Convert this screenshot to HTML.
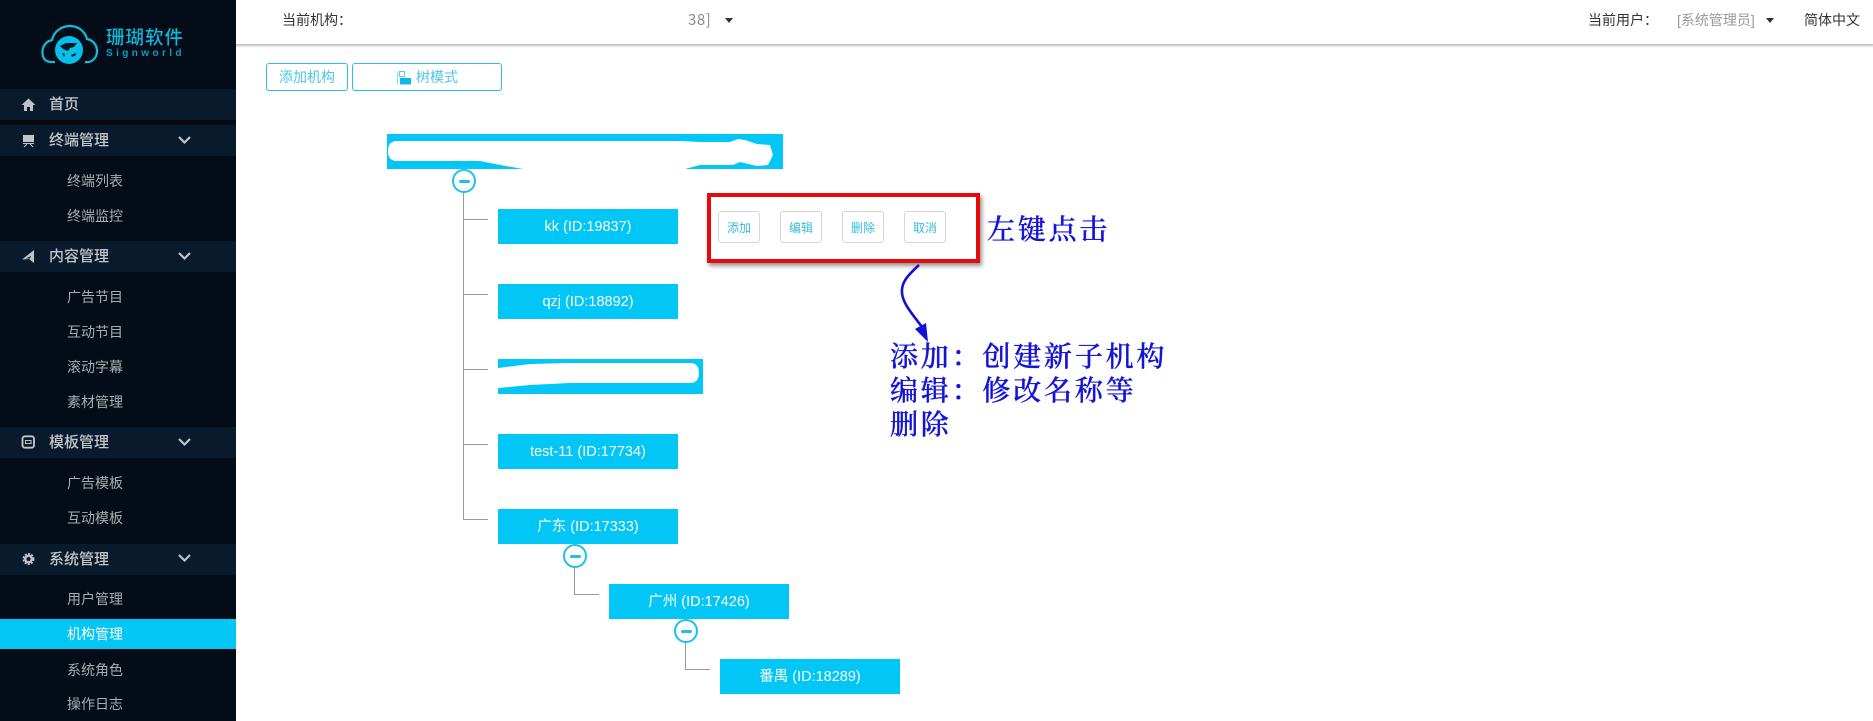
<!DOCTYPE html>
<html lang="zh-CN"><head><meta charset="utf-8"><title>机构管理</title>
<style>
html,body{margin:0;padding:0;width:1873px;height:721px;overflow:hidden;background:#fff}
body{position:relative;font-family:"Liberation Sans","Noto Sans CJK SC",sans-serif;font-size:14px}
div,span{position:absolute;box-sizing:border-box;white-space:nowrap}
i{font-style:normal}
#side{left:0;top:0;width:236px;height:721px;background:#040c18;z-index:2}
.h{left:0;width:236px;height:31px;background:#091a2d;color:#c4c8cc;font-size:15px;line-height:31px;padding-left:49px;font-weight:500}
.s{left:0;width:236px;height:30px;line-height:30px;padding-left:67px;color:#a9adb1;font-size:14px}
.s.a{background:#03c6f5;color:#fff}
svg{position:absolute;overflow:visible}
.n{background:#02c6f6;color:#fff;height:35px;line-height:37px;text-align:center;width:180px;font-size:14.5px}
.ln{background:#9a9a9a}
.c{width:24px;height:24px;border:2px solid #1cc0ea;border-radius:50%;background:#fff}
.c:after{content:"";position:absolute;left:4.500px;top:8.500px;width:11px;height:3px;background:#1cc0ea;border-radius:1.500px}
.b{border:1px solid #29bfe6;border-radius:3px;color:#4cc6e8;height:28px;top:63px;line-height:27px;text-align:center;font-size:14px}
.op{top:211px;width:42px;height:32px;border:1px solid #d4d6d8;border-radius:3px;color:#36bce2;font-size:12px;line-height:32px;text-align:center;background:#fff}
.t{color:#1414d6;font-family:"Noto Serif CJK SC","Liberation Serif",serif;font-size:28px;letter-spacing:2.800px;line-height:34px;font-weight:500;-webkit-text-stroke:.35px #1414d6}
.t i{font-family:"Noto Serif CJK TC",serif}
.top{font-size:14px;color:#333;top:10px;line-height:20px}
.top i{font-family:"Noto Sans CJK TC",sans-serif}
.car{width:0;height:0;border-left:4px solid transparent;border-right:4px solid transparent;border-top:5px solid #333;top:18px}
</style></head><body>

<div id="side">
<svg style="left:0;top:0" width="110" height="80" viewBox="0 0 110 80">
<path d="M55 62H52C45 62 42 58 42.500 51C43 45 47 41 52 40C54 31 62 26 70 26C78 26 85 31 87 39C93 40 97 45 97 51C97 58 92 63 85 62" fill="none" stroke="#12bbdc" stroke-width="2.200"/>
<circle cx="69" cy="50" r="14" fill="#03c0ea"/>
<path d="M60 46L66 43L77 43L74 47L70 48L68 51L63 49ZM71 55L76 53L76 55L72 57ZM62 53L65 54L64 57Z" fill="#041526"/>
</svg>
<span style="left:106px;top:27px;width:80px;color:#09b9de;font-size:18.500px;line-height:20px;letter-spacing:1px;font-weight:500;font-family:'Noto Sans CJK SC',sans-serif">珊瑚软件</span>
<span style="left:106px;top:48px;color:#05a0c6;font-size:10px;line-height:12px;letter-spacing:3.400px;font-weight:700">Signworld</span>

<div class="h" style="top:89px">首页</div>
<div class="h" style="top:125px">终端管理</div>
<div class="s" style="top:166px">终端列表</div>
<div class="s" style="top:201px">终端监控</div>
<div class="h" style="top:241px">内容管理</div>
<div class="s" style="top:282px">广告节目</div>
<div class="s" style="top:317px">互动节目</div>
<div class="s" style="top:352px">滚动字幕</div>
<div class="s" style="top:387px">素材管理</div>
<div class="h" style="top:427px">模板管理</div>
<div class="s" style="top:468px">广告模板</div>
<div class="s" style="top:503px">互动模板</div>
<div class="h" style="top:544px">系统管理</div>
<div class="s" style="top:584px">用户管理</div>
<div class="s a" style="top:619px">机构管理</div>
<div class="s" style="top:655px">系统角色</div>
<div class="s" style="top:689px">操作日志</div>

<svg style="left:0;top:0" width="236" height="721" viewBox="0 0 236 721" fill="#bfc3c7">
<path d="M28.500 98.500L21.500 105H24V111H27V107H30V111H33V105H35.500Z"/>
<path d="M23 135H34V142H23Z"/>
<path d="M23 143.500H34M24 147L27 144M33 147L30 144" fill="none" stroke="#bfc3c7" stroke-width="1"/>
<path d="M34 250L34 263L29 259L22 259.500ZM31 256L26 258.500L30 258.500Z" fill-rule="evenodd"/>
<rect x="22.500" y="436.300" width="11.500" height="11.400" rx="2.500" fill="none" stroke="#bfc3c7" stroke-width="1.900"/>
<path d="M25.500 440.500H31V443.500H25.500Z" fill="none" stroke="#bfc3c7" stroke-width="1.100"/>
<circle cx="28.500" cy="559" r="3.300" fill="none" stroke="#bfc3c7" stroke-width="2.400"/>
<circle cx="28.500" cy="559" r="5.100" fill="none" stroke="#bfc3c7" stroke-width="1.800" stroke-dasharray="2 1.340"/>
<g fill="none" stroke="#bfc3c7" stroke-width="2.200">
<path d="M179 137L184.500 142.500L190 137"/>
<path d="M179 253L184.500 258.500L190 253"/>
<path d="M179 439L184.500 444.500L190 439"/>
<path d="M179 555L184.500 560.500L190 555"/>
</g>
</svg>
</div>

<div style="left:236px;top:0;width:1637px;height:44px;background:#fff;box-shadow:0 1px 2px 1px #bdbdbd"></div>
<span class="top" style="left:282px">当前机构<i>：</i></span>
<span class="top" style="left:688px;color:#8a8a8a;font-size:15px;letter-spacing:.5px;font-family:'Noto Sans CJK SC',sans-serif">38]</span>
<div class="car" style="left:725px"></div>
<span class="top" style="left:1588px">当前用户<i>：</i></span>
<span class="top" style="left:1677px;color:#999">[系统管理员]</span>
<div class="car" style="left:1766px"></div>
<span class="top" style="left:1804px">简体中文</span>

<div class="b" style="left:266px;width:82px">添加机构</div>
<div class="b" style="left:352px;width:150px"></div>
<svg style="left:397px;top:71px" width="14" height="14" viewBox="0 0 14 14"><path d="M.5 .5V13.500" stroke="#8fd6ea" stroke-width="1"/><rect x="2.500" y=".5" width="5" height="5" fill="none" stroke="#5ccbe8"/><rect x="3" y="7" width="11" height="6.500" fill="#0fb8e6"/></svg>
<span style="left:416px;top:67px;color:#4cc6e8;font-size:14px;line-height:20px">树模式</span>

<div class="ln" style="left:463px;top:190px;width:1px;height:330px"></div>
<div class="ln" style="left:463px;top:219px;width:25px;height:1px"></div>
<div class="ln" style="left:463px;top:294px;width:25px;height:1px"></div>
<div class="ln" style="left:463px;top:369px;width:25px;height:1px"></div>
<div class="ln" style="left:463px;top:444px;width:25px;height:1px"></div>
<div class="ln" style="left:463px;top:519px;width:25px;height:1px"></div>
<div class="ln" style="left:574px;top:566px;width:1px;height:29px"></div>
<div class="ln" style="left:574px;top:594px;width:25px;height:1px"></div>
<div class="ln" style="left:685px;top:641px;width:1px;height:29px"></div>
<div class="ln" style="left:685px;top:669px;width:25px;height:1px"></div>

<div class="n" style="left:387px;top:134px;width:396px"></div>
<svg style="left:380px;top:130px" width="410" height="45" viewBox="380 130 410 45"><path d="M397 141H680L700 142H730L738 139L745 140L757 144L770 145L773 155L768 165L757 166L740 162L733 165H700L685 169H523L500 165L480 161H397Q388 161 388 151Q388 141 397 141Z" fill="#fff"/></svg>
<div class="c" style="left:452px;top:169px"></div>

<div class="n" style="left:498px;top:209px">kk (ID:19837)</div>
<div class="n" style="left:498px;top:284px">qzj (ID:18892)</div>
<div class="n" style="left:498px;top:359px;width:205px"></div>
<svg style="left:490px;top:350px" width="220" height="50" viewBox="490 350 220 50"><path d="M498 368L530 364L570 363H690Q699 363 699 373Q699 383 690 383H570L530 385L498 388Z" fill="#fff"/></svg>
<div class="n" style="left:498px;top:434px">test-11 (ID:17734)</div>
<div class="n" style="left:498px;top:509px">广东 (ID:17333)</div>
<div class="c" style="left:563px;top:544px"></div>
<div class="n" style="left:609px;top:584px">广州 (ID:17426)</div>
<div class="c" style="left:674px;top:619px"></div>
<div class="n" style="left:720px;top:659px">番禺 (ID:18289)</div>

<div style="left:707px;top:193px;width:273px;height:70px;border:4px solid #e60a0a;box-shadow:2px 3px 4px rgba(60,60,60,.55)"></div>
<div class="op" style="left:718px">添加</div>
<div class="op" style="left:780px">编辑</div>
<div class="op" style="left:842px">删除</div>
<div class="op" style="left:904px">取消</div>

<svg style="left:880px;top:250px" width="70" height="110" viewBox="880 250 70 110">
<path d="M919 265C907 276 901 283 902 293C903 305 915 317 925 331" fill="none" stroke="#1010d8" stroke-width="2.600"/>
<path d="M915 329L926 323L928 342Z" fill="#1010d8"/>
</svg>

<span class="t" style="left:987px;top:211px">左键点击</span>
<span class="t" style="left:890px;top:338px">添加<i>：</i>创建新子机构</span>
<span class="t" style="left:890px;top:372px">编辑<i>：</i>修改名称等</span>
<span class="t" style="left:890px;top:406px">删除</span>
</body></html>
